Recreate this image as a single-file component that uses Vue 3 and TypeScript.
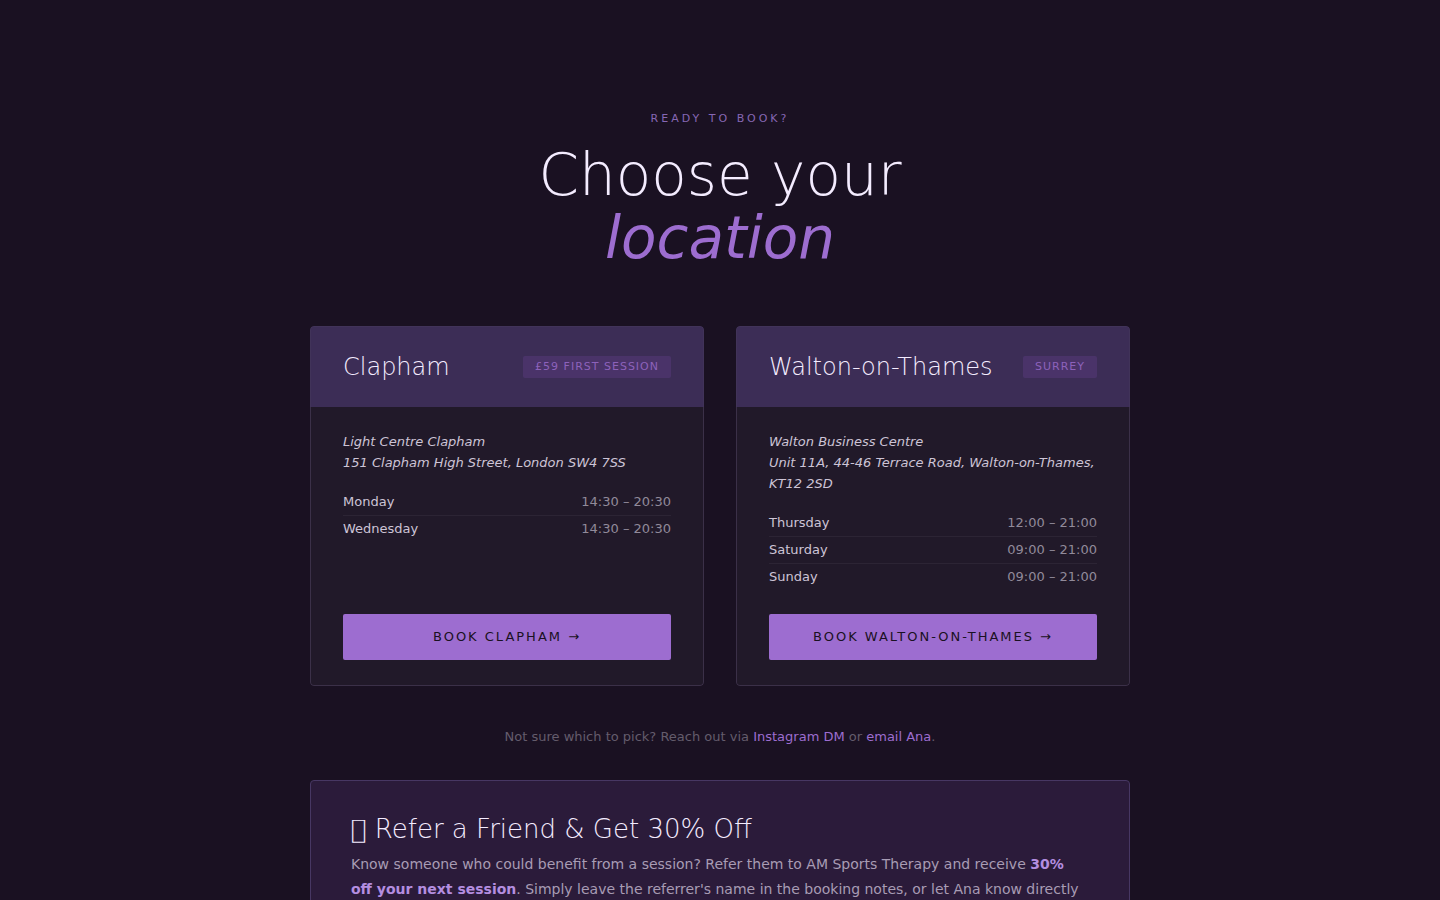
<script setup lang="ts">
interface Session {
  day: string
  hours: string
}

interface Clinic {
  id: string
  name: string
  badge: string
  venue: string
  address: string
  sessions: Session[]
}

const clinics: Clinic[] = [
  {
    id: 'clapham',
    name: 'Clapham',
    badge: '£59 first session',
    venue: 'Light Centre Clapham',
    address: '151 Clapham High Street, London SW4 7SS',
    sessions: [
      { day: 'Monday', hours: '14:30 – 20:30' },
      { day: 'Wednesday', hours: '14:30 – 20:30' },
    ],
  },
  {
    id: 'walton',
    name: 'Walton-on-Thames',
    badge: 'Surrey',
    venue: 'Walton Business Centre',
    address: 'Unit 11A, 44-46 Terrace Road, Walton-on-Thames, KT12 2SD',
    sessions: [
      { day: 'Thursday', hours: '12:00 – 21:00' },
      { day: 'Saturday', hours: '09:00 – 21:00' },
      { day: 'Sunday', hours: '09:00 – 21:00' },
    ],
  },
]
</script>

<template>
  <main class="booking">
    <div class="inner">
      <header class="intro">
        <p class="eyebrow">Ready to book?</p>
        <h2 class="title">Choose your<br /><em>location</em></h2>
      </header>

      <div class="cards">
        <article v-for="clinic in clinics" :key="clinic.id" class="card">
          <div class="card-head">
            <h3 class="card-name">{{ clinic.name }}</h3>
            <span class="badge">{{ clinic.badge }}</span>
          </div>
          <div class="card-body">
            <address class="address">{{ clinic.venue }}<br />{{ clinic.address }}</address>
            <table class="hours">
              <tbody>
                <tr v-for="s in clinic.sessions" :key="s.day">
                  <th scope="row">{{ s.day }}</th>
                  <td>{{ s.hours }}</td>
                </tr>
              </tbody>
            </table>
            <a class="book" :href="'#' + clinic.id">Book {{ clinic.name }} →</a>
          </div>
        </article>
      </div>

      <p class="note">
        Not sure which to pick? Reach out via <a href="#instagram">Instagram DM</a> or
        <a href="#email">email Ana</a>.
      </p>

      <section class="referral">
        <h3 class="referral-title">&#x10FFFD; Refer a Friend &amp; Get 30% Off</h3>
        <p class="referral-text">
          Know someone who could benefit from a session? Refer them to AM Sports Therapy and receive
          <strong>30% off your next session</strong>. Simply leave the referrer's name in the booking
          notes, or let Ana know directly
        </p>
      </section>
    </div>
  </main>
</template>

<style>
html,
body {
  background: #1a1122;
}

html {
  height: 100%;
  overflow: hidden;
}

body {
  margin: 0;
}
</style>

<style scoped>
.booking {
  padding: 108px 24px 0;
  color: #f4ecff;
  font-family: 'DejaVu Sans', sans-serif;
  font-size: 13px;
  line-height: 20px;
}

.inner {
  max-width: 820px;
  margin: 0 auto;
}

.intro {
  text-align: center;
}

.eyebrow {
  margin: 0 0 14px;
  color: #8667b4;
  font-size: 11px;
  letter-spacing: 3px;
  line-height: 22px;
  text-transform: uppercase;
}

.title {
  margin: 0;
  font-size: 58px;
  font-weight: 200;
  line-height: 63px;
}

.title em {
  color: #9d6dd0;
  font-weight: 400;
}

.cards {
  display: grid;
  grid-template-columns: repeat(auto-fit, minmax(320px, 1fr));
  gap: 32px;
  margin-top: 56px;
}

.card {
  display: flex;
  flex-direction: column;
  overflow: hidden;
  border-radius: 4px;
}

.card-head {
  display: flex;
  align-items: center;
  justify-content: space-between;
  gap: 16px;
  padding: 20px 32px;
  border: 1px solid #413359;
  border-bottom: 0;
  border-radius: 4px 4px 0 0;
  background: #3c2d56;
}

.card-name {
  margin: 0;
  font-size: 24px;
  font-weight: 200;
  line-height: 40px;
}

.badge {
  padding: 1px 12px;
  border-radius: 2px;
  background: #4a3369;
  color: #8d62bb;
  font-size: 11px;
  letter-spacing: 1px;
  text-transform: uppercase;
  white-space: nowrap;
}

.card-body {
  display: flex;
  flex: 1;
  flex-direction: column;
  padding: 24px 32px 25px;
  border: 1px solid #3b3048;
  border-top: 0;
  border-radius: 0 0 4px 4px;
  background: #211929;
}

.address {
  margin-bottom: 16px;
  color: #cdc4d6;
  line-height: 21px;
}

.hours {
  width: 100%;
  margin-bottom: 24px;
  border-collapse: collapse;
}

.hours th,
.hours td {
  padding: 3px 0;
}

.hours tr + tr th,
.hours tr + tr td {
  border-top: 1px solid #2c2434;
}

.hours th {
  color: #cdc4d6;
  font-weight: 400;
  text-align: left;
}

.hours td {
  color: #918a9a;
  text-align: right;
}

.book {
  margin-top: auto;
  padding: 13px 16px;
  border-radius: 2px;
  background: #9d6dd0;
  color: #1a1122;
  letter-spacing: 2px;
  text-align: center;
  text-decoration: none;
  text-transform: uppercase;
}

.note {
  margin: 40px 0 0;
  color: #645c6c;
  line-height: 22px;
  text-align: center;
}

.note a {
  color: #9d6dd0;
  text-decoration: none;
}

.referral {
  margin-top: 32px;
  padding: 32px 40px;
  border: 1px solid #473763;
  border-radius: 4px;
  background: #2b1b3a;
}

.referral-title {
  margin: 0 0 7px;
  font-size: 26px;
  font-weight: 200;
  line-height: 32px;
}

.referral-text {
  margin: 0;
  color: #a89cb4;
  font-size: 14px;
  line-height: 25px;
}

.referral-text strong {
  color: #b48ee0;
}
</style>
